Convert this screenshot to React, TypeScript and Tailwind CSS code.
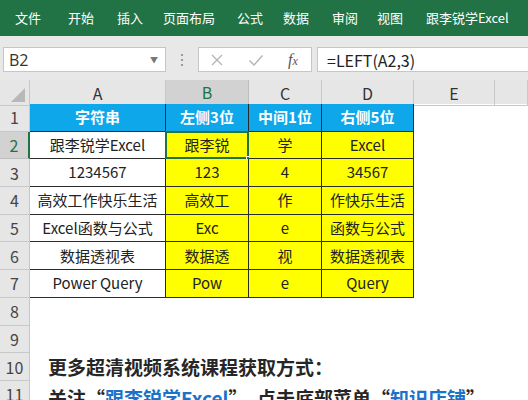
import React from "react";

const menus = ["文件", "开始", "插入", "页面布局", "公式", "数据", "审阅", "视图", "跟李锐学Excel"];
const menuX = [15, 68, 117, 163, 237, 283, 332, 377, 426];

const cols = ["A", "B", "C", "D", "E", ""];
const grid = "grid grid-cols-[30px_136px_83px_73px_92px_81px_1fr]";

const rows: string[][] = [
  ["跟李锐学Excel", "跟李锐", "学", "Excel"],
  ["1234567", "123", "4", "34567"],
  ["高效工作快乐生活", "高效工", "作", "作快乐生活"],
  ["Excel函数与公式", "Exc", "e", "函数与公式"],
  ["数据透视表", "数据透", "视", "数据透视表"],
  ["Power Query", "Pow", "e", "Query"],
];

const font = { fontFamily: '"Noto Sans CJK SC", "Noto Sans", sans-serif' };

function RowHead({ n, active }: { n: number; active?: boolean }) {
  return (
    <div
      className={
        "flex items-center justify-center border-b border-r text-[16px] " +
        (active
          ? "bg-[#d2d2d2] border-r-[#217346] border-r-2 border-b-[#bdbdbd] text-[#217346]"
          : "bg-[#e6e6e6] border-[#c8c8c8] text-[#444]")
      }
    >
      {n}
    </div>
  );
}

export default function App() {
  return (
    <div className="w-[528px] h-[400px] overflow-hidden bg-white" style={font}>
      {/* ribbon tabs */}
      <div className="relative h-[36px] bg-[#217346] text-white text-[13px]">
        {menus.map((m, i) => (
          <span key={m} className="absolute top-[9px] leading-[18px]" style={{ left: menuX[i] }}>
            {m}
          </span>
        ))}
      </div>

      {/* formula bar */}
      <div className="h-[44px] bg-[#e8e8e8] flex items-center pl-[3px] pt-[3px]">
        <div className="w-[163px] h-[25px] bg-white border border-[#c6c6c6] flex items-center justify-between pl-[5px] pr-[7px]">
          <span className="text-[16px] text-[#333]" style={{ fontFamily: '"Open Sans", sans-serif' }}>B2</span>
          <span className="text-[8px] text-[#777]">▼</span>
        </div>
        <div className="w-[32px] flex flex-col items-center gap-[3px]">
          <span className="w-[2px] h-[2px] bg-[#999]" />
          <span className="w-[2px] h-[2px] bg-[#999]" />
          <span className="w-[2px] h-[2px] bg-[#999]" />
        </div>
        <div className="w-[114px] h-[25px] bg-white border border-[#c6c6c6] flex items-center pl-[11px]">
          <svg width="14" height="14" viewBox="0 0 14 14">
            <path d="M2 2 L12 12 M12 2 L2 12" stroke="#b5b5b5" strokeWidth="1.4" />
          </svg>
          <svg width="16" height="14" viewBox="0 0 16 14" className="ml-[24px]">
            <path d="M1.5 7.5 L6 12 L14.5 2.5" stroke="#b5b5b5" strokeWidth="1.5" fill="none" />
          </svg>
          <span
            className="ml-[24px] text-[16px] italic text-[#555]"
            style={{ fontFamily: '"Liberation Serif", serif' }}
          >
            f<span className="text-[12px]">x</span>
          </span>
        </div>
        <div className="flex-1 ml-[5px] h-[25px] bg-white border border-[#c6c6c6] border-r-0 flex items-center pl-[9px] text-[16px] text-[#222]">
          =LEFT(A2,3)
        </div>
      </div>

      {/* column headers */}
      <div className={grid + " h-[24px] bg-[#e6e6e6]"}>
        <div className="relative border-r border-b border-[#c8c8c8]">
          <div className="absolute right-[4px] bottom-[3px] w-0 h-0 border-l-[14px] border-l-transparent border-b-[14px] border-b-[#b8b8b8]" />
        </div>
        {cols.map((c) => (
          <div
            key={c || "f"}
            className={
              "flex items-center justify-center text-[16px] border-r " +
              (c === "B"
                ? "bg-[#d2d2d2] border-b-2 border-b-[#217346] border-r-[#bdbdbd] text-[#217346]"
                : "border-b border-[#c8c8c8] text-[#333]")
            }
          >
            {c}
          </div>
        ))}
      </div>

      {/* header row */}
      <div className={grid + " h-[27.7px]"}>
        <RowHead n={1} />
        {["字符串", "左侧3位", "中间1位", "右侧5位"].map((h) => (
          <div
            key={h}
            className="flex items-center justify-center bg-[#0ea7ea] text-white font-bold text-[15px] border-r border-b border-[#2b2b2b]"
          >
            {h}
          </div>
        ))}
        <div />
        <div />
      </div>

      {rows.map((r, i) => (
        <div key={i} className={grid + " h-[27.7px]"}>
          <RowHead n={i + 2} active={i === 0} />
          {r.map((v, j) => (
            <div
              key={j}
              className={
                "relative flex items-center justify-center text-[15px] text-[#222] border-r border-b border-[#2b2b2b] " +
                (j === 0 ? "bg-white" : "bg-[#ffff00]")
              }
            >
              {i === 0 && j === 1 && (
                <>
                  <div className="absolute -left-[1px] -top-[1px] -right-[1px] -bottom-[1px] border-2 border-[#217346]" />
                  <div className="absolute -right-[4px] -bottom-[4px] w-[6px] h-[6px] bg-[#217346] border border-white" />
                </>
              )}
              <span className="relative">{v}</span>
            </div>
          ))}
          <div />
          <div />
        </div>
      ))}

      {[8, 9].map((n) => (
        <div key={n} className={grid + " h-[27.7px]"}>
          <RowHead n={n} />
        </div>
      ))}

      <div className="flex h-[27.7px]">
        <div className="w-[30px] shrink-0 grid">
          <RowHead n={10} />
        </div>
        <div className="pl-[18px] flex items-center whitespace-nowrap text-[19px] font-bold text-[#262626]">
          更多超清视频系统课程获取方式：
        </div>
      </div>
      <div className="flex h-[27.7px]">
        <div className="w-[30px] shrink-0 grid">
          <RowHead n={11} />
        </div>
        <div className="pl-[18px] pt-[7px] leading-[20px] whitespace-nowrap text-[19px] font-bold text-[#262626]">
          关注“<span className="text-[#1a73c8]">跟李锐学Excel</span>”，点击底部菜单“
          <span className="text-[#1a73c8]">知识店铺</span>”
        </div>
      </div>
    </div>
  );
}
